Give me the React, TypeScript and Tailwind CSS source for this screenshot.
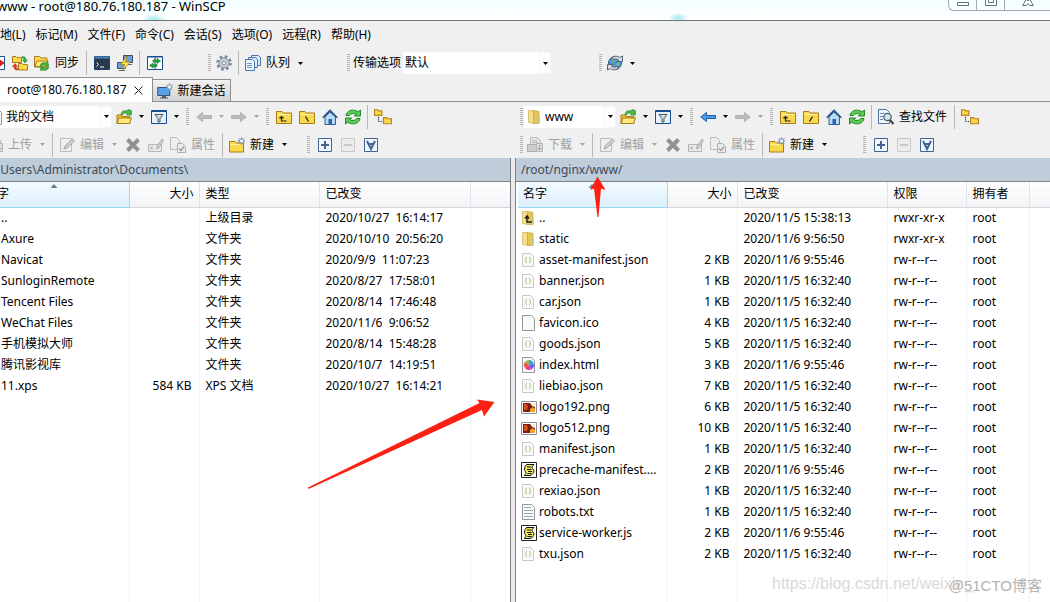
import type { ReactNode } from 'react';
import clsx from 'clsx';

type IconProps = { children: ReactNode; className?: string };

const Icon = ({ children, className }: IconProps) => (
  <svg viewBox='0 0 16 16' className={clsx('shrink-0', className ?? 'h-4 w-4')} fill='none' aria-hidden='true'>
    {children}
  </svg>
);

const FOLDER = 'M.5 2.500h5.500l1.500 1.500h8v10.500h-15z';

const FolderUp = () => (
  <Icon>
    <path d={FOLDER} fill='#fbd94d' stroke='#a87b18' />
    <path d='M1.500 5.500h13' stroke='#fff2a8' />
    <path d='M5.500 8v4h5M3.500 9.500l2-2 2 2' stroke='#222' strokeWidth='1.2' />
  </Icon>
);

const FolderRoot = ({ remote }: { remote?: boolean }) => (
  <Icon>
    <path d={FOLDER} fill='#fbd94d' stroke='#a87b18' />
    <path d='M1.500 5.500h13' stroke='#fff2a8' />
    <path d={remote ? 'M9.500 7.500l-3 5' : 'M6.500 7.500l3 5'} stroke='#222' strokeWidth='1.3' />
  </Icon>
);

const HomeIcon = () => (
  <Icon>
    <path d='M3 8v7.500h10.500V8L8 3z' fill='#b9dcf8' stroke='#2f5f96' />
    <path d='M.8 8.800L8 1.500l7.200 7.300' stroke='#24508a' strokeWidth='1.6' />
    <path d='M6.500 10h3.500v5.500H6.500z' fill='#2d66ad' />
  </Icon>
);

const RefreshIcon = () => (
  <Icon>
    <path d='M1 6.500C1.500 3 5 .8 8.500 1.200c2 .1 3.500.8 4.500 1.800l2.500-2v6h-6l1.700-1.900C8.500 4 5.500 4.500 4 6.500z' fill='#5ecb55' stroke='#1f8a2c' />
    <path d='M15 9.500c-.5 3.500-4 5.700-7.500 5.300-2-.1-3.500-.8-4.500-1.800l-2.500 2V9h6l-1.700 1.900c2.700 1.100 5.700.6 7.200-1.400z' fill='#5ecb55' stroke='#1f8a2c' />
  </Icon>
);

const TreeIcon = () => (
  <Icon className='h-[18px] w-[18px]'>
    <path d='M.5 1.500h2.500l1 1h3v4H.5zM8.500 8.500H11l1 1h3.500v4.500h-7z' fill='#fbd94d' stroke='#b4841c' />
    <path d='M4 8v4h4' stroke='#222' strokeDasharray='1 1' />
  </Icon>
);

const OpenFolder = () => (
  <Icon>
    <path d='M1 14.500V6h4l1 1.500h8v7z' fill='#f4c22f' stroke='#a87b18' />
    <path d='M1 14.500l2-5.500h12.500L13.500 14.500z' fill='#ffe97a' stroke='#a87b18' />
    <path d='M5 6c0-3.500 3-5 6-4l1-1.500 3.500 1v4.500h-5l1-1.500C9 3.500 7 4.500 6.500 6z' fill='#45b944' stroke='#218a28' strokeWidth='.6' />
  </Icon>
);

const FilterIcon = () => (
  <Icon>
    <path d='M.5 1.500h15v13H.5z' fill='#e6f1fc' stroke='#174f92' />
    <path d='M.5 2h15' stroke='#174f92' strokeWidth='2' />
    <path d='M4 5.500h8L9 9.500v3.500H7V9.500z' fill='#d8dde3' stroke='#4b5661' />
  </Icon>
);

const ArrowIcon = ({ right, active }: { right?: boolean; active?: boolean }) => (
  <Icon className={clsx('h-4 w-4', right && 'rotate-180')}>
    <path d='M.8 8L6.500 3.500v3h9v3h-9v3z' fill={active ? '#4b9be8' : '#bdbdbd'} stroke={active ? '#1d5ca6' : '#b0b0b0'} />
  </Icon>
);

const EditIcon = () => (
  <Icon>
    <path d='M1.500 1.500h11v13h-11z' fill='#eee' stroke='#bcbcbc' />
    <path d='M5 12l1-3 7.500-7 2 2L8 11z' fill='#d0d0d0' stroke='#a6a6a6' />
  </Icon>
);

const DeleteIcon = () => (
  <Icon>
    <path d='M2.500 2.500l11 11m0-11l-11 11' stroke='#929292' strokeWidth='4' />
  </Icon>
);

const RenameIcon = () => (
  <Icon>
    <path d='M.5 7.500h13v7H.5z' fill='#ececec' stroke='#b5b5b5' />
    <path d='M2 9.500l3 3m0-3l-3 3M8 11l6-9 1.500 1.500L10 12z' fill='#d4d4d4' stroke='#a8a8a8' />
  </Icon>
);

const PropsIcon = () => (
  <Icon>
    <path d='M.500.500h6l3 3v9h-9z' fill='#eee' stroke='#bcbcbc' />
    <path d='M7.500 6.500h5l3 3v6h-8z' fill='#ececec' stroke='#b0b0b0' />
    <path d='M9 11.500l2 2 3-4' stroke='#a0a0a0' strokeWidth='1.400' />
  </Icon>
);

const TransferIcon = () => (
  <Icon>
    <path d='M3.500.500h7l3 3v8h-10z' fill='#e6e6e6' stroke='#bcbcbc' />
    <path d='M5 3.500h5M5 5.500h6' stroke='#b5b5b5' />
    <path d='M.500 7.500h9v7h-9z' fill='#cdcdcd' stroke='#b0b0b0' />
    <path d='M9.500 6.500h6v8h-6z' fill='#dedede' stroke='#b5b5b5' />
    <path d='M12.500 8v5m-2-2l2 2 2-2' stroke='#a0a0a0' />
  </Icon>
);

const NewFolder = () => (
  <Icon>
    <path d='M.5 4.500h5.500l1.500 1.500h7v9H.5z' fill='#fbd94d' stroke='#a87b18' />
    <path d='M1.500 7.500h12' stroke='#fff2a8' />
    <path d='M12.500 0v8M8.500 4h8M9.700 1.200l5.600 5.600M15.300 1.200L9.700 6.800' stroke='#6e93c4' />
    <circle cx='12.500' cy='4' r='2' fill='#fff' stroke='#6e93c4' />
  </Icon>
);

const BoxIcon = ({ kind }: { kind: 'plus' | 'minus' | 'invert' }) => (
  <Icon>
    <path d='M1.500 1.500h13v13h-13z' fill={kind === 'minus' ? '#ececec' : '#eef6ff'} stroke={kind === 'minus' ? '#c8c8c8' : '#41658f'} />
    {kind === 'plus' && <path d='M8 4v8M4 8h8' stroke='#41658f' strokeWidth='2' />}
    {kind === 'minus' && <path d='M4 8h8' stroke='#bdbdbd' strokeWidth='1.500' />}
    {kind === 'invert' && <path d='M4 4l4 8 4-8M5.500 7h5' stroke='#41658f' strokeWidth='2' />}
  </Icon>
);

const FindIcon = () => (
  <Icon>
    <path d='M.500.500h8l3 3v11h-11z' fill='#eef5fc' stroke='#4f7299' />
    <path d='M2 4.500h4M2 7.500h3M2 10.500h3' stroke='#6b8db5' />
    <circle cx='9.500' cy='8' r='3.700' fill='#cfe4f5' stroke='#555f6b' strokeWidth='1.300' />
    <path d='M12 11l3.500 4' stroke='#444' strokeWidth='2' />
  </Icon>
);

const CompareIcon = () => (
  <Icon>
    <path d='M.5 1.500h15v13H.5z' fill='#fff' stroke='#174f92' />
    <path d='M8 1.500v13' stroke='#174f92' />
    <path d='M9 8h4m-2-3l4 3-4 3z' fill='#d42020' stroke='#d42020' />
  </Icon>
);

const SyncBrowse = () => (
  <Icon>
    <path d='M.5 1.500h3.500l1 1h4.500v5h-9zM6.500 8.500H10l1 1h4.500v5.500h-9z' fill='#fbd94d' stroke='#a87b18' />
    <path d='M10 1.500c3 0 4 1 4 3.500h1.500L13 8l-2.500-3H12c0-1.500-.5-2-2-2z' fill='#3cae3c' stroke='#218a28' strokeWidth='.5' />
    <path d='M6 15c-3 0-4-1-4-3.500H.5L3 8.500l2.500 3H4c0 1.500.5 2 2 2z' fill='#dd3a2c' stroke='#b31f16' strokeWidth='.5' />
  </Icon>
);

const SyncFolder = () => (
  <Icon>
    <path d='M.5 1.500h5l1.500 1.500h6v9H.5z' fill='#fbd94d' stroke='#a87b18' />
    <path d='M1 11.500l2-5.500h11l-2 6z' fill='#ffe97a' stroke='#a87b18' />
    <path d='M6 10.500c1-2.500 3.500-3.500 6-2.500l1.500-1.500 1.500 4.500h-4.500l1-1.300c-1.500-.3-2.500.300-3 1.300z M15 12c-1 3-4 4-6.500 3L7 16l-1-4h4.500l-1 1.500c1.500.2 2.500-.3 3.500-1.500z' fill='#3cae3c' stroke='#218a28' strokeWidth='.5' />
  </Icon>
);

const TerminalIcon = () => (
  <Icon>
    <path d='M.5 1.500h15v13H.5z' fill='#26384a' stroke='#1e4470' />
    <path d='M.5 2.500h15' stroke='#4c83c4' strokeWidth='2' />
    <path d='M2.500 7.500l2 2-2 2M6 12h4' stroke='#fff' />
  </Icon>
);

const PuttyIcon = () => (
  <Icon>
    <path d='M6.500.500h9v7h-9z' fill='#6f9fd8' stroke='#3a4f68' />
    <path d='M.500 7.500h8v6h-8z' fill='#6f9fd8' stroke='#3a4f68' />
    <path d='M2 15.500h6M11 9.500h4' stroke='#5c6670' />
    <path d='M10 1L3.500 9.500h4L5.500 15.500 13 7H8.500z' fill='#ffe23c' stroke='#a87b18' strokeWidth='.7' />
  </Icon>
);

const SyncPanes = () => (
  <Icon>
    <path d='M.5 1.500h15v13H.5z' fill='#fff' stroke='#174f92' />
    <path d='M.5 2h15M8 2v12' stroke='#174f92' />
    <path d='M6 5h4V3.500L13.500 6 10 8.500V7H6zM10 9.500H6V8L2.500 10.500 6 13v-1.500h4z' fill='#2fa53c' stroke='#1b8230' strokeWidth='.7' />
  </Icon>
);

const GearIcon = () => (
  <Icon>
    <circle cx='8' cy='8' r='6.500' stroke='#7b8694' strokeWidth='2.500' strokeDasharray='2.600 2.500' />
    <circle cx='8' cy='8' r='5' fill='#cdd3db' stroke='#7b8694' />
    <circle cx='8' cy='8' r='2' fill='#f2f2f2' stroke='#7b8694' />
  </Icon>
);

const QueueIcon = () => (
  <Icon>
    <path d='M6.500.500h7l2 2v8h-9z' fill='#dcebfa' stroke='#4778ad' />
    <path d='M3.500 2.500h7l2 2v8h-9z' fill='#dcebfa' stroke='#4778ad' />
    <path d='M.500 4.500h7l2 2v9h-9z' fill='#eef6ff' stroke='#4778ad' />
    <path d='M2 8.500h5M2 10.500h5M2 12.500h5' stroke='#6f9bcb' />
  </Icon>
);

const GlobeIcon = () => (
  <Icon>
    <circle cx='8' cy='8' r='6.500' fill='#4d94dd' stroke='#3b5a80' />
    <path d='M4 5l3-1 1 2-3 2zM10 8l3-1-1 4-3-1zM5 9l2 1v2l-2-1z' fill='#6cc06a' />
    <path d='M5 2.500C8 .5 11 1 12.500 2.500L15.500 1v5.500H10L11.500 5C10 3.500 7 3.500 5 5zM11 13.500C8 15.500 5 15 3.500 13.500L.5 15V9.500H6L4.500 11c1.500 1.500 4.500 1.500 6.500 0z' fill='#d8dde2' stroke='#56616e' />
  </Icon>
);

const SessionIcon = () => (
  <Icon>
    <path d='M.8 4.500h12v8H.8z' fill='#5aa0e8' stroke='#27527f' />
    <path d='M5.500 12.500h3v2h-3zM3 15h8' fill='#667' stroke='#4b5a6a' />
    <path d='M12.500 0v8M8.500 4h8M9.700 1.200l5.600 5.600M15.300 1.200L9.700 6.800' stroke='#8a9cb4' />
    <circle cx='12.500' cy='4' r='2' fill='#fff' stroke='#8a9cb4' />
  </Icon>
);

const FolderIcon = ({ up }: { up?: boolean }) => (
  <Icon>
    <path d='M1.500 1.500h5v13l-5-1z' fill='#f3df8c' stroke='#d1b04c' strokeWidth='.7' />
    <path d='M6.500 1.500l5.500.8v12.200H6.500z' fill='#e5c55d' stroke='#c9a545' strokeWidth='.7' />
    <path d='M11 8h2v6h-2z' fill='#b9d28e' />
    {up && <path d='M6 7v5h5M4 8.500l2-2.500 2 2.500' stroke='#222' strokeWidth='1.500' />}
  </Icon>
);

type FileKind = 'up' | 'folder' | 'json' | 'blank' | 'html' | 'png' | 'js' | 'txt';

const FileIcon = ({ kind }: { kind: FileKind }) => {
  if (kind === 'up' || kind === 'folder') return <FolderIcon up={kind === 'up'} />;
  if (kind === 'png') {
    return (
      <Icon>
        <path d='M.5 2.500h15v12H.5z' fill='#fff' stroke='#8b8f94' />
        <path d='M2 4h12v9H2z' fill='#7d1c10' />
        <path d='M3 5h3l1 3-1 3H3z' fill='#d2501e' />
        <path d='M9 10l3-2 2 2v3H9z' fill='#f0a42a' />
        <path d='M9 4h5v4l-3-1z' fill='#f5e9d8' />
      </Icon>
    );
  }
  if (kind === 'js') {
    return (
      <Icon>
        <path d='M.5.500h15v15H.5z' fill='#fff' stroke='#222' />
        <path d='M6 2.500h7c-1 1-2 2-2 3s2 2 2 3.500S11 13.500 9 13.500H3c1-.500 2-1.500 2-2.500S3.500 9 3.500 7 4.500 3 6 2.500z' fill='#eeea5a' stroke='#111' />
        <path d='M6 5h4M6 7.500h4.500M7 9.500h4M6.500 11.500h4' stroke='#111' />
      </Icon>
    );
  }
  return (
    <Icon>
      <path d={kind === 'json' ? 'M1.500 1.500h8l3 3v10h-11z' : 'M1.500 .5h9l3 3v12h-12z'} fill='#fafafa' stroke={kind === 'json' ? '#c6c9cc' : '#92979c'} />
      {kind === 'json' && <path d='M6 5c-1.500 0-1 2-1.200 2.500L4 8l.8.500C5 9 4.500 11 6 11M8 5c1.500 0 1 2 1.200 2.500L10 8l-.8.500C9 9 9.500 11 8 11' stroke='#b3c069' />}
      {kind === 'txt' && <path d='M3 3.500h7M3 6.500h9M3 9.500h9M3 12.500h9' stroke='#9aa7b5' />}
      {kind === 'html' && (
        <>
          <path d='M8 8V3a5 5 0 0 1 4.800 4z' fill='#3b9cf0' />
          <path d='M8 8l4.800-1A5 5 0 0 1 10 12.600z' fill='#6a54d8' />
          <path d='M8 8l2 4.600A5 5 0 0 1 4 11z' fill='#e83a9a' />
          <path d='M8 8l-4 3a5 5 0 0 1 0-6z' fill='#f4533a' />
          <path d='M8 8L4 5a5 5 0 0 1 4-2z' fill='#7cc442' />
        </>
      )}
    </Icon>
  );
};

const Caret = ({ disabled }: { disabled?: boolean }) => (
  <svg viewBox='0 0 5 3' className={clsx('h-[3px] w-[5px]', disabled ? 'fill-[#a5a5a5]' : 'fill-black')} aria-hidden='true'>
    <path d='M0 0h5L2.500 3z' />
  </svg>
);

type ToolProps = { icon: ReactNode; name: string; text?: boolean; disabled?: boolean; menu?: boolean };

const Tool = ({ icon, name, text, disabled, menu }: ToolProps) => (
  <div className='flex h-6 shrink-0 items-center'>
    <button
      type='button'
      title={name}
      aria-label={name}
      disabled={disabled}
      className={clsx('flex h-full items-center disabled:text-[#a0a0a0]', text ? 'gap-[5px] pr-1 pl-[3px]' : 'w-[23px] justify-center')}
    >
      {icon}
      {text && <span>{name}</span>}
    </button>
    {menu && (
      <button type='button' aria-label={name + ' ▾'} disabled={disabled} className={clsx('flex h-full items-center justify-center', text ? 'w-[13px]' : 'w-3')}>
        <Caret disabled={disabled} />
      </button>
    )}
  </div>
);

const Grip = ({ tight }: { tight?: boolean }) => (
  <span
    className={clsx(
      'ml-1 h-[18px] w-[3px] shrink-0 bg-[repeating-linear-gradient(to_bottom,#b4b4b4_0_1px,#f0f0f0_1px_2px)]',
      tight ? 'mr-px' : 'mr-[3px]'
    )}
  />
);

const Separator = () => <span className='mx-[3px] h-6 w-px shrink-0 bg-[#b8b8b8]' />;

type ComboProps = { label: string; value: string; className: string; icon?: ReactNode };

const Combo = ({ label, value, className, icon }: ComboProps) => (
  <div className={clsx('relative flex h-[22px] shrink-0 items-center bg-white', className)}>
    {icon && <span className='pl-[3px]'>{icon}</span>}
    <select aria-label={label} className='h-full w-full appearance-none bg-transparent pr-3 pl-0.5 outline-none'>
      <option>{value}</option>
    </select>
    <span className='pointer-events-none absolute inset-y-0 right-0 flex w-3 items-center justify-center border border-[#f4f4f4]'>
      <Caret />
    </span>
  </div>
);

const NavBar = ({ place, remote }: { place: string; remote?: boolean }) => (
  <div className='flex h-[29px] items-center'>
    {remote && <Grip tight />}
    <Combo label='位置' value={place} icon={<FileIcon kind={remote ? 'folder' : 'txt'} />} className={remote ? 'w-[92px]' : 'ml-[5px] w-[127px]'} />
    <Tool name='打开目录' icon={<OpenFolder />} menu />
    <Tool name='过滤' icon={<FilterIcon />} menu />
    <Grip />
    <Tool name='后退' icon={<ArrowIcon active={remote} />} disabled={!remote} menu />
    <Tool name='前进' icon={<ArrowIcon right />} disabled menu />
    <Grip />
    <Tool name='上级目录' icon={<FolderUp />} />
    <Tool name='根目录' icon={<FolderRoot remote={remote} />} />
    <Tool name='主目录' icon={<HomeIcon />} />
    <Tool name='刷新' icon={<RefreshIcon />} />
    <Separator />
    {remote && (
      <>
        <Tool name='查找文件' icon={<FindIcon />} text />
        <Separator />
      </>
    )}
    <Tool name='目录树' icon={<TreeIcon />} />
  </div>
);

const ActionBar = ({ transfer, remote }: { transfer: string; remote?: boolean }) => (
  <div className='flex h-[27px] items-center'>
    {remote ? <Grip tight /> : <span className='w-1' />}
    <Tool name={transfer} icon={<TransferIcon />} text disabled menu />
    <Separator />
    <Tool name='编辑' icon={<EditIcon />} text disabled menu />
    <Tool name='删除' icon={<DeleteIcon />} disabled />
    <Tool name='重命名' icon={<RenameIcon />} disabled />
    <Tool name='属性' icon={<PropsIcon />} text disabled />
    <Separator />
    <Tool name='新建' icon={<NewFolder />} text menu />
    <span className={remote ? 'w-7' : 'w-3'} />
    <Grip />
    <Tool name='选择' icon={<BoxIcon kind='plus' />} />
    <Tool name='取消选择' icon={<BoxIcon kind='minus' />} disabled />
    <Tool name='反选' icon={<BoxIcon kind='invert' />} />
  </div>
);

type FileRow = { name: string; kind: FileKind; cells: string[] };

const localRows: FileRow[] = [
  { name: '..', kind: 'up', cells: ['', '上级目录', '2020/10/27  16:14:17'] },
  { name: 'Axure', kind: 'folder', cells: ['', '文件夹', '2020/10/10  20:56:20'] },
  { name: 'Navicat', kind: 'folder', cells: ['', '文件夹', '2020/9/9  11:07:23'] },
  { name: 'SunloginRemote', kind: 'folder', cells: ['', '文件夹', '2020/8/27  17:58:01'] },
  { name: 'Tencent Files', kind: 'folder', cells: ['', '文件夹', '2020/8/14  17:46:48'] },
  { name: 'WeChat Files', kind: 'folder', cells: ['', '文件夹', '2020/11/6  9:06:52'] },
  { name: '手机模拟大师', kind: 'folder', cells: ['', '文件夹', '2020/8/14  15:48:28'] },
  { name: '腾讯影视库', kind: 'folder', cells: ['', '文件夹', '2020/10/7  14:19:51'] },
  { name: '11.xps', kind: 'blank', cells: ['584 KB', 'XPS 文档', '2020/10/27  16:14:21'] },
];

const DIR = 'rwxr-xr-x';
const FILE = 'rw-r--r--';
const NOON = '2020/11/5 16:32:40';
const MORNING = '2020/11/6 9:55:46';

const remoteRows: FileRow[] = [
  { name: '..', kind: 'up', cells: ['', '2020/11/5 15:38:13', DIR, 'root'] },
  { name: 'static', kind: 'folder', cells: ['', '2020/11/6 9:56:50', DIR, 'root'] },
  { name: 'asset-manifest.json', kind: 'json', cells: ['2 KB', MORNING, FILE, 'root'] },
  { name: 'banner.json', kind: 'json', cells: ['1 KB', NOON, FILE, 'root'] },
  { name: 'car.json', kind: 'json', cells: ['1 KB', NOON, FILE, 'root'] },
  { name: 'favicon.ico', kind: 'blank', cells: ['4 KB', NOON, FILE, 'root'] },
  { name: 'goods.json', kind: 'json', cells: ['5 KB', NOON, FILE, 'root'] },
  { name: 'index.html', kind: 'html', cells: ['3 KB', MORNING, FILE, 'root'] },
  { name: 'liebiao.json', kind: 'json', cells: ['7 KB', NOON, FILE, 'root'] },
  { name: 'logo192.png', kind: 'png', cells: ['6 KB', NOON, FILE, 'root'] },
  { name: 'logo512.png', kind: 'png', cells: ['10 KB', NOON, FILE, 'root'] },
  { name: 'manifest.json', kind: 'json', cells: ['1 KB', NOON, FILE, 'root'] },
  { name: 'precache-manifest....', kind: 'js', cells: ['2 KB', MORNING, FILE, 'root'] },
  { name: 'rexiao.json', kind: 'json', cells: ['1 KB', NOON, FILE, 'root'] },
  { name: 'robots.txt', kind: 'txt', cells: ['1 KB', NOON, FILE, 'root'] },
  { name: 'service-worker.js', kind: 'js', cells: ['2 KB', MORNING, FILE, 'root'] },
  { name: 'txu.json', kind: 'json', cells: ['2 KB', NOON, FILE, 'root'] },
];

type Column = { title: string; width: string };

const localColumns: Column[] = [
  { title: '名字', width: 'w-[149px]' },
  { title: '大小', width: 'w-[70px]' },
  { title: '类型', width: 'w-[120px]' },
  { title: '已改变', width: 'w-[151px]' },
];

const remoteColumns: Column[] = [
  { title: '名字', width: 'w-[149px]' },
  { title: '大小', width: 'w-[70px]' },
  { title: '已改变', width: 'w-[150px]' },
  { title: '权限', width: 'w-[79px]' },
  { title: '拥有者', width: 'w-[63px]' },
];

const FileTable = ({ columns, rows }: { columns: Column[]; rows: FileRow[] }) => (
  <table className='h-full w-full table-fixed whitespace-pre'>
    <thead>
      <tr className='h-[25px] bg-linear-to-b from-white to-[#f1f3f6]'>
        {columns.map((column, i) => (
          <th
            key={column.title}
            className={clsx(
              'relative border-r border-b p-0 font-normal',
              column.width,
              i === 0 ? 'border-[#96d9f9] bg-linear-to-b from-[#f3fafe] to-[#dcf1fb] pl-[5px] text-left' : 'border-r-[#e0e3e8] border-b-[#d5d5d5]',
              i === 1 && 'pr-[5px] text-right',
              i > 1 && 'pl-[6px] text-left'
            )}
          >
            {column.title}
            {i === 0 && (
              <svg viewBox='0 0 7 4' className='absolute top-0.5 left-1/2 h-1 w-[7px] -translate-x-1/2 fill-[#5f7f9c]' aria-hidden='true'>
                <path d='M0 4L3.500 0 7 4z' />
              </svg>
            )}
          </th>
        ))}
        <th className='border-b border-[#d5d5d5]' />
      </tr>
    </thead>
    <tbody>
      {rows.map((row) => (
        <tr key={row.name} className='h-[21px]'>
          <td className='overflow-hidden border-r border-[#ecf3fa] p-0 pl-[3px]'>
            <span className='flex items-center gap-0.5'>
              <FileIcon kind={row.kind} />
              {row.name}
            </span>
          </td>
          {row.cells.map((cell, i) => (
            <td key={i} className={clsx('border-r border-[#ecf3fa] p-0', i === 0 ? 'pr-[7px] text-right' : 'pl-[6px]')}>
              {cell}
            </td>
          ))}
          <td />
        </tr>
      ))}
      <tr>
        {columns.map((column) => (
          <td key={column.title} className='border-r border-[#ecf3fa]' />
        ))}
        <td />
      </tr>
    </tbody>
  </table>
);

const PathBar = ({ path }: { path: string }) => (
  <div className='flex h-6 shrink-0 items-center border-b border-[#7d8288] bg-[#bfcddb] px-[5px] text-[#3d4a57]'>{path}</div>
);

const Menu = () => (
  <nav className='flex h-7 items-center pl-[3px]'>
    {['本地(L)', '标记(M)', '文件(F)', '命令(C)', '会话(S)', '选项(O)', '远程(R)', '帮助(H)'].map((item) => (
      <button key={item} type='button' className='px-[5px]'>
        {item}
      </button>
    ))}
  </nav>
);

const MainToolbar = () => (
  <div className='flex h-7 items-center pl-[5px]'>
    <Tool name='比较目录' icon={<CompareIcon />} />
    <Tool name='同步浏览' icon={<SyncBrowse />} />
    <Tool name='同步' icon={<SyncFolder />} text />
    <Separator />
    <Tool name='终端' icon={<TerminalIcon />} />
    <Tool name='PuTTY' icon={<PuttyIcon />} />
    <Separator />
    <Tool name='保持同步' icon={<SyncPanes />} />
    <span className='w-[38px]' />
    <Grip tight />
    <Tool name='选项' icon={<GearIcon />} />
    <Separator />
    <Tool name='队列' icon={<QueueIcon />} text menu />
    <span className='w-9' />
    <Grip tight />
    <span className='px-0.5'>传输选项</span>
    <Combo label='传输选项' value='默认' className='w-[148px]' />
    <span className='w-[44px]' />
    <Grip tight />
    <Tool name='语言' icon={<GlobeIcon />} menu />
  </div>
);

const TitleBar = () => (
  <header className='flex h-[21px] items-start justify-between border-b border-[#6c7676] bg-white bg-[radial-gradient(ellipse_10px_5px_at_698px_18px,#a5e4f2,transparent),radial-gradient(ellipse_12px_5px_at_174px_19px,#a5e4f2,transparent),linear-gradient(to_bottom,#f2feff,#fff)]'>
    <h1 className='pl-[17px] text-[13px] leading-3'>www - root@180.76.180.187 - WinSCP</h1>
    <div className='flex h-[11px] divide-x divide-[#a3a8ab] rounded-bl-md border-b border-l border-[#a3a8ab]'>
      <button type='button' aria-label='最小化' className='flex w-7 justify-center'>
        <svg viewBox='0 0 12 8' className='h-2 w-3' fill='#fff' stroke='#66707a'>
          <path d='M.5 2.500h11v3H.5z' />
        </svg>
      </button>
      <button type='button' aria-label='最大化' className='flex w-7 justify-center'>
        <svg viewBox='0 0 12 8' className='h-2 w-3' fill='#fff' stroke='#66707a'>
          <path d='M.5-3.500h11v9H.5zM3.500-.500h5v3h-5z' />
        </svg>
      </button>
      <button type='button' aria-label='关闭' className='flex w-[45px] justify-center'>
        <svg viewBox='0 0 12 8' className='h-2 w-3' fill='#fff' stroke='#66707a'>
          <path d='M3.500-2l2.500 3 2.500-3M4 0L.5 5.500h4L6 3.500l1.500 2h4L8 0' />
        </svg>
      </button>
    </div>
  </header>
);

const Tabs = () => (
  <div className='flex h-[25px] items-end'>
    <div className='flex h-full items-center gap-[7px] border-t border-r border-[#8a8f94] bg-white pr-[9px] pl-[27px]'>
      <button type='button'>root@180.76.180.187</button>
      <button type='button' aria-label='关闭标签'>
        <svg viewBox='0 0 9 9' className='h-[9px] w-[9px]' stroke='#222'>
          <path d='M.5.500l8 8m0-8l-8 8' />
        </svg>
      </button>
    </div>
    <button type='button' className='flex h-[23px] items-center gap-[5px] border border-l-0 border-[#8a8f94] bg-linear-to-b from-[#f2f2f2] to-[#d2d2d2] px-1'>
      <SessionIcon />
      新建会话
    </button>
    <span className='h-px grow bg-[#8a8f94]' />
  </div>
);

const Arrows = () => (
  <svg width='1050' height='602' className='pointer-events-none absolute top-0 left-0 fill-[#fc2114]' aria-hidden='true'>
    <path d='M308 487.500L479.500 403 477 399.500 494.500 402 484 416.500 482 410 308.500 489z' />
    <path d='M597.500 176.500L605.500 190 601 188.500 598.500 217H597.500L594 188.500 590 190z' />
  </svg>
);

const App = () => {
  return (
    <div className="relative h-screen overflow-hidden bg-[#f0f0f0] font-['Noto_Sans','Noto_Sans_CJK_SC',sans-serif] text-xs text-black">
      {/* the window hangs a little over the left edge of the screen */}
      <div className='-ml-5 flex h-full flex-col'>
        <TitleBar />
        <Menu />
        <MainToolbar />
        <Tabs />
        <main className='grid min-h-0 grow grid-cols-[530fr_6px_534fr]'>
          <section className='flex min-w-0 flex-col'>
            <NavBar place='我的文档' />
            <ActionBar transfer='上传' />
            <PathBar path='C:\Users\Administrator\Documents\' />
            <div className='min-h-0 grow bg-white'>
              <FileTable columns={localColumns} rows={localRows} />
            </div>
          </section>
          <div className='mt-14 border-x border-[#7d8288] bg-[#ebe9ec]' />
          <section className='flex min-w-0 flex-col'>
            <NavBar place='www' remote />
            <ActionBar transfer='下载' remote />
            <PathBar path='/root/nginx/www/' />
            <div className='min-h-0 grow bg-white pl-0.5'>
              <FileTable columns={remoteColumns} rows={remoteRows} />
            </div>
          </section>
        </main>
      </div>
      <Arrows />
      <div className="pointer-events-none absolute right-2 bottom-1.5 font-['Liberation_Sans','Noto_Sans_CJK_SC',sans-serif] text-[#d9d9d9]">
        <span className='absolute right-0 bottom-0 w-[270px] text-base'>https://blog.csdn.net/weixin_</span>
        <span className='relative text-[15px] text-[#b3b3b3]'>@51CTO博客</span>
      </div>
    </div>
  );
};

export default App;
